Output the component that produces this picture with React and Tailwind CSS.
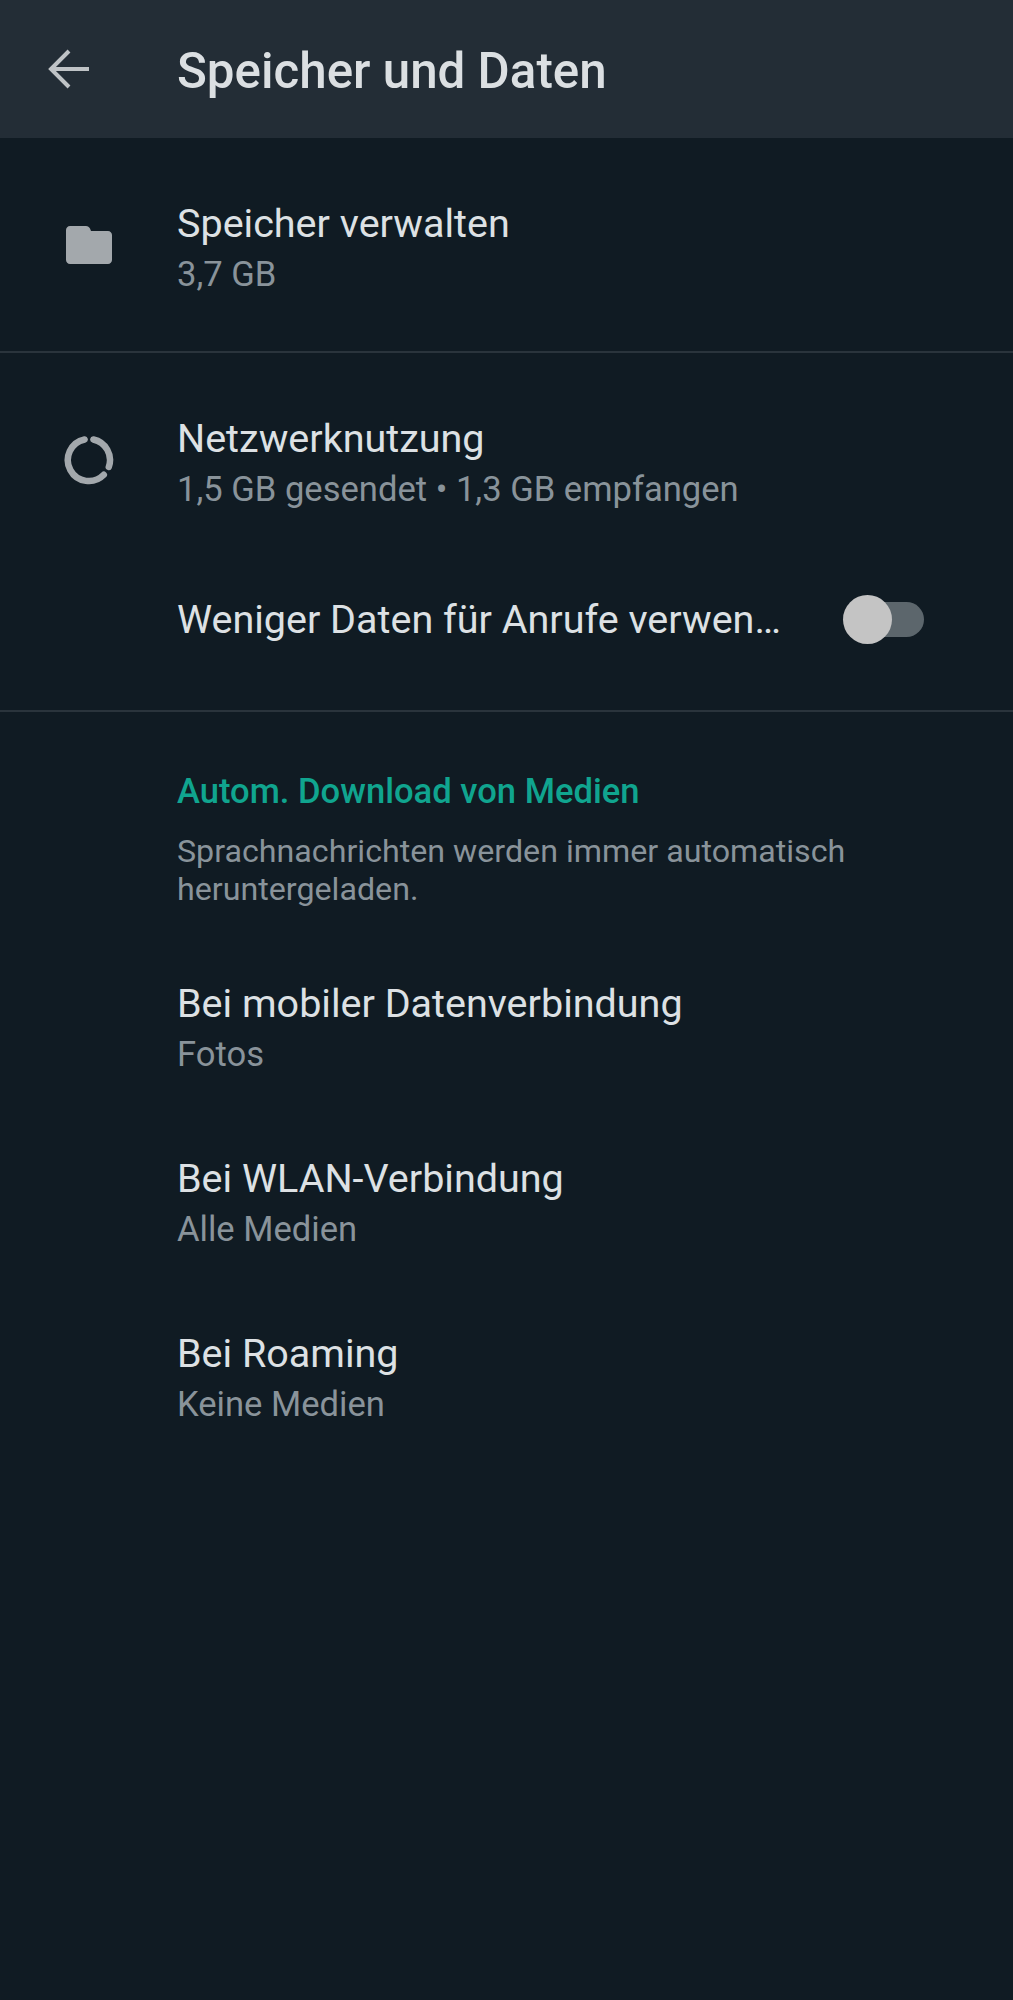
import React from 'react';

const FolderIcon = () => (
  <svg width="46" height="38" viewBox="0 0 46 38" className="block">
    <path d="M4 0h16c2 0 3 1 4 2.500L25 5h17c2.200 0 4 1.800 4 4v25c0 2.200-1.800 4-4 4H4c-2.200 0-4-1.800-4-4V4c0-2.200 1.800-4 4-4z" fill="#a3a8ac" />
  </svg>
);

const RingIcon = () => (
  <svg width="50" height="50" viewBox="0 0 50 50" className="block -ml-[2px]">
    <g fill="none" stroke="#a3a8ac" strokeWidth="6.500" strokeLinecap="round">
      <path d="M20.600 4.500 A 21 21 0 1 0 39.800 39.800" />
      <path d="M29.400 4.500 A 21 21 0 0 1 44.800 32" />
    </g>
  </svg>
);

const BackArrow = () => (
  <svg width="42" height="40" viewBox="0 0 42 40" className="block">
    <path d="M41 20H4M21 2 3 20l18 18" fill="none" stroke="#bfc3c6" strokeWidth="4" />
  </svg>
);

const Row = ({ icon, title, sub, className, textClass = '' }) => (
  <div className={`flex items-center ${className}`}>
    <div className="w-[177px] shrink-0 pl-[66px]">{icon}</div>
    <div className={textClass}>
      <div className="text-[39.500px] leading-[50px] text-[#dde1e4]">{title}</div>
      <div className="text-[34.600px] leading-[50px] text-[#89939a]">{sub}</div>
    </div>
  </div>
);

const App = () => {
  return (
    <div className="w-[1013px] h-[2000px] bg-[#101b23] font-['Roboto',sans-serif] overflow-hidden">
      {/* Header */}
      <div className="h-[138px] bg-[#232d36] flex items-center">
        <div className="w-[177px] shrink-0 pl-[48px]">
          <BackArrow />
        </div>
        <h1 className="pt-[4px] text-[49.300px] leading-[60px] font-medium text-[#dbdfe2]">Speicher und Daten</h1>
      </div>

      <Row className="h-[215px] border-b-2 border-[#2a343c]" textClass="pt-[8px]" icon={<FolderIcon />} title="Speicher verwalten" sub="3,7 GB" />

      {/* Netzwerk */}
      <div className="h-[359px] border-b-2 border-[#2a343c]">
        <Row className="h-[214px]" textClass="pt-[8px]" icon={<RingIcon />} title="Netzwerknutzung" sub="1,5 GB gesendet • 1,3 GB empfangen" />
        <div className="flex items-center h-[104px] pl-[177px]">
          <span className="pt-[1px] text-[39.500px] leading-[50px] text-[#dde1e4]">Weniger Daten für Anrufe verwen…</span>
          <div className="relative ml-auto mr-[89px] w-[74px] h-[35px] rounded-full bg-[#5c666c]">
            <div className="absolute left-[-7px] top-[-7px] w-[49px] h-[49px] rounded-full bg-[#c4c4c4]" />
          </div>
        </div>
      </div>

      {/* Medien */}
      <div className="pl-[177px] pr-[120px] pt-[57px]">
        <h2 className="text-[34.600px] leading-[44px] font-medium text-[#10a58f]">Autom. Download von Medien</h2>
        <p className="mt-[19px] text-[32.200px] leading-[38px] text-[#89939a]">
          Sprachnachrichten werden immer automatisch heruntergeladen.
        </p>
      </div>

      <div className="mt-[33px]">
        <Row className="h-[175px]" title="Bei mobiler Datenverbindung" sub="Fotos" />
        <Row className="h-[175px]" title="Bei WLAN-Verbindung" sub="Alle Medien" />
        <Row className="h-[175px]" title="Bei Roaming" sub="Keine Medien" />
      </div>
    </div>
  );
};

export default App;
